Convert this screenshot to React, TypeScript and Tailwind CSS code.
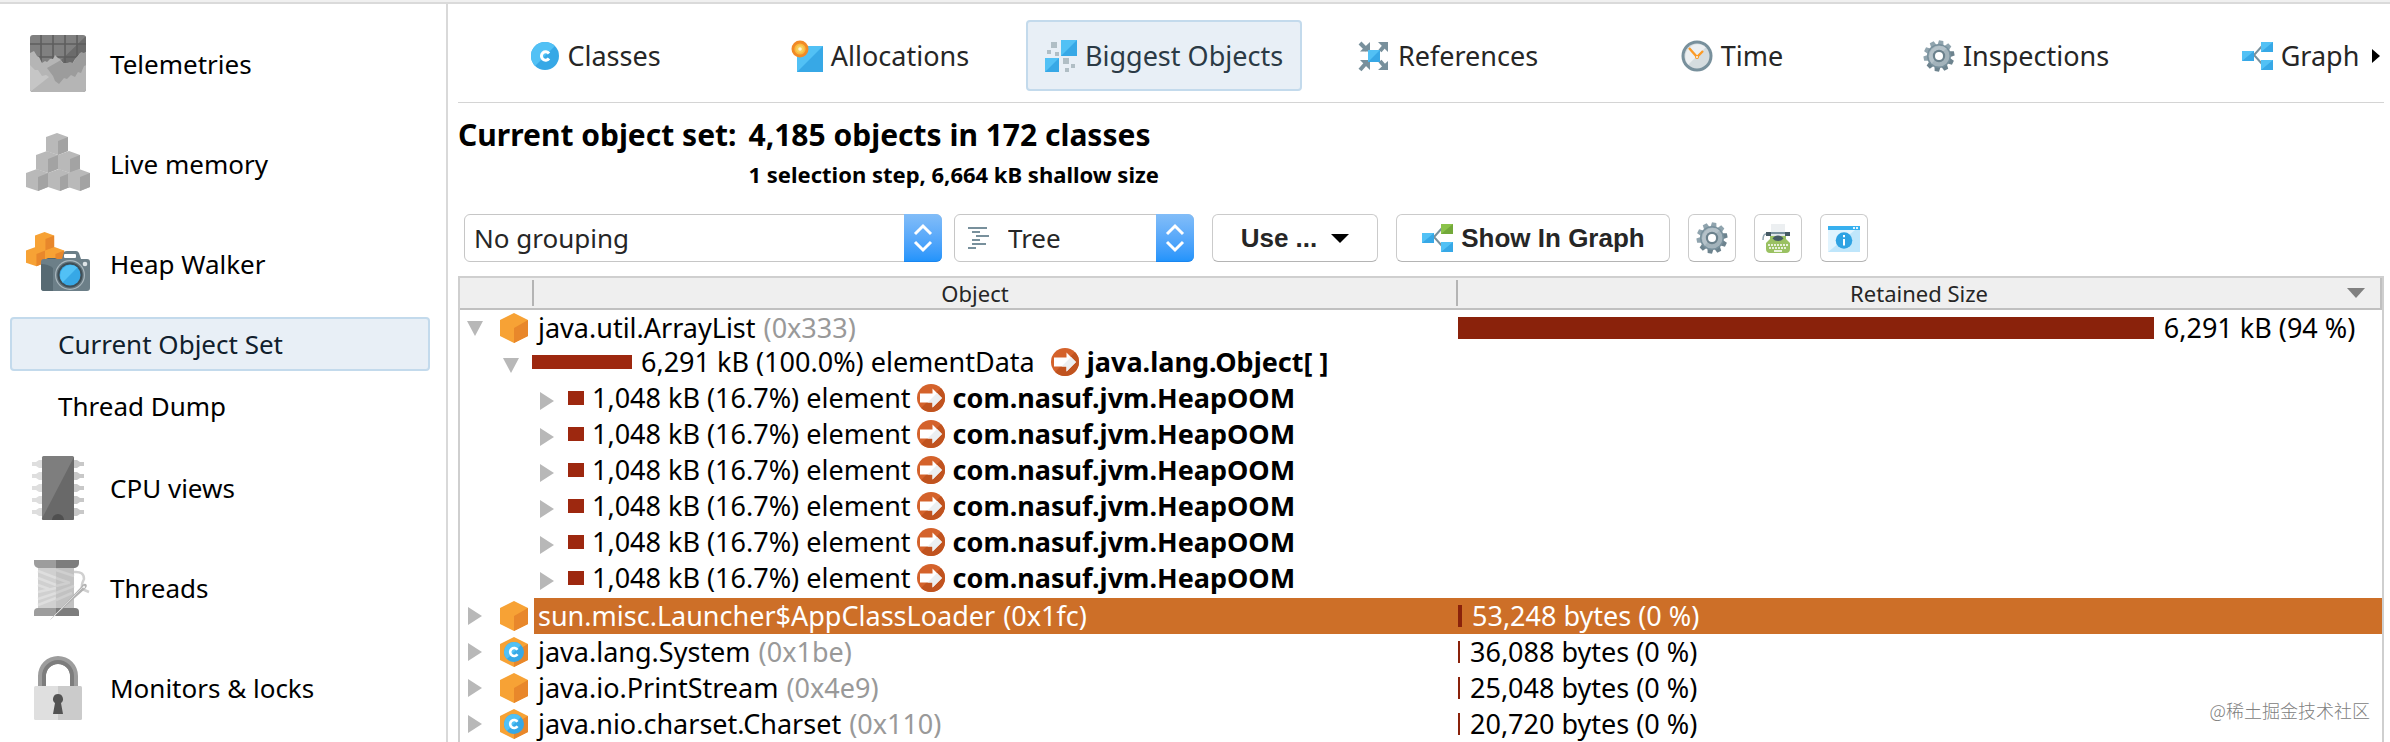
import React, { useState } from "react";

type IconProps = { className?: string };

/* ---------- sidebar icons ---------- */

function TelemetriesIcon() {
  return (
    <svg viewBox="0 0 64 64" className="size-16 shrink-0" aria-hidden="true">
      <clipPath id="tele">
        <rect x="4" y="3" width="56" height="57" rx="3" />
      </clipPath>
      <g clipPath="url(#tele)">
        <path d="M4 3h56v57H4z" fill="#808080" />
        <path d="M60 4v30H29z" fill="#6b6b6b" />
        <path d="M15 3v30M27 3v30M39 3v30M51 3v30M4 12h56M4 25h56" stroke="#5e5e5e" strokeWidth="1.6" />
        <path
          d="M4 21l4-2 3 5 2 1 3 6 3-2 2 1 3-3 3 0 2-4 3 3 2 1 4 5 5-1 3 1 3-5 3-3 2-3 3 1 3-2v40H4z"
          fill="#b5b5b5"
        />
        <path d="M35 28l1 3 5-0 3-1 3 1 3-5 3-3 2-3 3 1 3-2v14l-3 1-3 7-3-1-3 5-4-2-4 4-3-1-5 6-4-3-2-5-6-8z" fill="#9c9c9c" />
        <path d="M4 33l5 5 3 0 4 6 4-1 3 2-19 15z" fill="#c6c6c6" />
      </g>
    </svg>
  );
}

function Cube({ x, y, s = 1, light, dark }: { x: number; y: number; s?: number; light: string; dark: string }) {
  return (
    <g transform={`translate(${x} ${y}) scale(${s})`}>
      <path d="M0 4L11 0l11 4v14l-10 4L0 18z" fill={light} />
      <path d="M12 8l10-4v14l-10 4z" fill={dark} />
    </g>
  );
}

function MemoryIcon() {
  const c = { light: "#b9b9b9", dark: "#a3a3a3" };
  return (
    <svg viewBox="0 0 64 64" className="size-16 shrink-0" aria-hidden="true">
      <Cube x={20} y={1} {...c} />
      <Cube x={10} y={19} {...c} />
      <Cube x={32} y={19} {...c} />
      <Cube x={0} y={37} {...c} />
      <Cube x={22} y={37} {...c} />
      <Cube x={42} y={37} {...c} />
    </svg>
  );
}

function HeapIcon() {
  const c = { light: "#f7a235", dark: "#e8872b" };
  return (
    <svg viewBox="0 0 64 64" className="size-16 shrink-0" aria-hidden="true">
      <Cube x={9} y={0} s={0.87} {...c} />
      <Cube x={0} y={15} s={0.87} {...c} />
      <Cube x={19} y={15} s={0.87} {...c} />
      <path d="M36 27l2-7q1-1 3-1h9q2 0 3 2l2 6h6q3 0 3 3v26q0 3-3 3H18q-3 0-3-3V30q0-3 3-3z" fill="#6c7f88" />
      <path d="M15 32q7 0 12 4v23h-9q-3 0-3-3z" fill="#576a73" />
      <path d="M20 27h9l2-1h-9z" fill="#54666f" />
      <rect x="38" y="22" width="12" height="4" rx="1" fill="#fff" />
      <circle cx="44" cy="43" r="15" fill="#a9b7be" />
      <circle cx="44" cy="43" r="13.8" fill="#64757d" />
      <circle cx="44" cy="43" r="12.5" fill="#3f4e56" />
      <circle cx="44" cy="43" r="10.5" fill="#37a8e6" />
      <path d="M36.600 50.400a10.500 10.500 0 0 1 14.800-14.800z" fill="#52c1f5" />
      <circle cx="59" cy="32" r="2.300" fill="#dfe5e8" />
    </svg>
  );
}

function CpuIcon() {
  const rows = [8, 20, 32, 44, 56];
  return (
    <svg viewBox="0 0 64 64" className="size-16 shrink-0" aria-hidden="true">
      {rows.map((y) => (
        <g key={y}>
          <path d={`M6 ${y - 2}h4l3-2h3v8h-3l-3-2H6z`} fill="#dedede" />
          <path d={`M58 ${y - 2}h-4l-3-2h-3v8h3l3-2h4z`} fill="#c8c8c8" />
        </g>
      ))}
      <rect x="16" y="0" width="32" height="64" rx="1.5" fill="#7e7e7e" />
      <path d="M48 1v61.500q0 1.500-1.500 1.500H17.500q-1.500 0-1.500-1.500z" fill="#696969" />
      <path d="M26 64a6 6 0 0 1 12 0z" fill="#4f4f4f" />
    </svg>
  );
}

function ThreadsIcon() {
  return (
    <svg viewBox="0 0 64 64" className="size-16 shrink-0" aria-hidden="true">
      <path d="M12 12h18v40H12z" fill="#d0d0d0" />
      <path d="M30 12h18v40H30z" fill="#c2c2c2" />
      <path d="M12 15l18 7M12 22l18 7M12 29l11 4M12 43l18-6M12 49l18-7M12 36l18-4" stroke="#dedede" strokeWidth="2.500" />
      <path d="M30 14l18 6M30 22l14 5M30 37l18-7M30 44l16-7M30 30l12-3" stroke="#cfcfcf" strokeWidth="2.500" />
      <path d="M8 4h22v8H12q-4-1-4-5z" fill="#9d9d9d" />
      <path d="M30 4h23v3q0 4-4 5H30z" fill="#7d7d7d" />
      <path d="M12 52h18v8H8v-4q0-4 4-4z" fill="#9d9d9d" />
      <path d="M30 52h19q4 0 4 4v4H30z" fill="#7d7d7d" />
      <path d="M48 16q10-1 10 7-3 6-2 10l7 3" fill="none" stroke="#d0d0d0" strokeWidth="2.500" />
      <path d="M24.500 63.500L55 31q2-4 5-3 2 2-1 5z" fill="#b3b3b3" />
      <path d="M24.500 63.500L57 31" stroke="#d9d9d9" strokeWidth="1" />
      <circle cx="58" cy="31" r="1.200" fill="#eee" />
    </svg>
  );
}

function LockIcon() {
  return (
    <svg viewBox="0 0 64 64" className="size-16 shrink-0" aria-hidden="true">
      <path d="M12 31V20a20 20 0 0 1 40 0v11h-8V20a12 12 0 0 0-24 0v11z" fill="#9d9d9d" />
      <path d="M16 31V20a16 16 0 0 1 32 0v11h-4V20a12 12 0 0 0-24 0v11z" fill="#7d7d7d" />
      <path d="M32 30h22.500q1.500 0 1.500 1.500v31q0 1.500-1.500 1.500H32z" fill="#cbcbcb" />
      <path d="M32 30H9.500Q8 30 8 31.500v31Q8 64 9.500 64H32z" fill="#dfdfdf" />
      <path d="M32 38a5 5 0 0 1 3 9l2 11H27l2-11a5 5 0 0 1 3-9z" fill="#535353" />
    </svg>
  );
}

/* ---------- tab and toolbar icons ---------- */

function ClassBadge({ className = "size-7" }: IconProps) {
  return (
    <svg viewBox="0 0 28 28" className={className} aria-hidden="true">
      <circle cx="14" cy="14" r="14" fill="#37a8e6" />
      <path d="M4.100 23.900A14 14 0 0 1 23.900 4.100z" fill="#52c1f5" />
      <path d="M18 11.500a4.200 4.200 0 1 0 0 5" fill="none" stroke="#fff" strokeWidth="3" />
    </svg>
  );
}

function AllocationsIcon() {
  return (
    <svg viewBox="0 0 32 32" className="size-8" aria-hidden="true">
      <path d="M6 6h26v26H6z" fill="#37a8e6" />
      <path d="M6 32V6h26z" fill="#52c1f5" />
      <circle cx="9" cy="9" r="8.500" fill="#f18a26" />
      <circle cx="9" cy="9" r="5.600" fill="#f9b93f" />
      <circle cx="9" cy="9" r="3.800" fill="#f7cf5c" />
      <circle cx="9" cy="9" r="1.800" fill="#fff6d8" />
    </svg>
  );
}

function BiggestIcon() {
  return (
    <svg viewBox="0 0 32 32" className="size-8" aria-hidden="true">
      <path d="M16 0h16v16H16zM0 18h14v14H0z" fill="#37a8e6" />
      <path d="M16 16V0h16zM0 32V18h14z" fill="#52c1f5" />
      <path d="M6 2h6v6H6zM2 10h4v4H2zM10 12h4v4h-4zM18 18h6v6h-6zM26 24h4v4h-4zM20 28h4v4h-4z" fill="#b0bec5" />
    </svg>
  );
}

function ReferencesIcon() {
  return (
    <svg viewBox="0 0 32 32" className="size-8" aria-hidden="true">
      <path d="M2 3l7 7M2 30l7-8M22 11l6-7M22 21l6 7" stroke="#78909c" strokeWidth="4" />
      <path d="M2 11.500h10V2zM20 2h10v10zM2 20h10v10zM30 21v9H20z" fill="#78909c" />
      <path d="M10 10h12v12H10z" fill="#37a8e6" />
      <path d="M10 22V10h12z" fill="#52c1f5" />
    </svg>
  );
}

function ClockIcon() {
  return (
    <svg viewBox="0 0 32 32" className="size-8" aria-hidden="true">
      <circle cx="16" cy="16" r="15.500" fill="#78909c" />
      <circle cx="16" cy="16" r="12.500" fill="#d5dcdf" />
      <path d="M7.200 24.800A12.500 12.500 0 0 1 24.800 7.200z" fill="#eceff1" />
      <path d="M8 8l8 9 6-6" fill="none" stroke="#fb9a26" strokeWidth="2.400" />
      <circle cx="16" cy="17" r="2" fill="#fb9a26" />
      <circle cx="16" cy="17" r="0.900" fill="#fff" />
    </svg>
  );
}

function GearIcon() {
  const teeth = [0, 36, 72, 108, 144, 180, 216, 252, 288, 324];
  return (
    <svg viewBox="0 0 32 32" className="size-8" aria-hidden="true">
      {teeth.map((a) => (
        <path
          key={a}
          d="M13 5l.8-4.500h4.400L19 5z"
          fill={a > 60 && a < 230 ? "#6d838e" : "#90a4ae"}
          transform={`rotate(${a + 8} 16 16)`}
        />
      ))}
      <circle cx="16" cy="16" r="12" fill="#78909c" />
      <circle cx="16" cy="16" r="10.500" fill="#a3b3bb" />
      <path d="M8.600 23.400A10.500 10.500 0 0 1 23.400 8.600z" fill="#b5c2c9" />
      <circle cx="16" cy="16" r="6.200" fill="#6b818c" />
      <circle cx="16" cy="16" r="4" fill="#fff" />
    </svg>
  );
}

function GraphIcon({ top = "#37a8e6", topLight = "#52c1f5" }: { top?: string; topLight?: string }) {
  return (
    <svg viewBox="0 0 32 32" className="size-8" aria-hidden="true">
      <path d="M22 5l-9 10 9 10" fill="none" stroke="#78909c" strokeWidth="2" />
      <path d="M1 11h12v10H1zM20 20h12v10H20z" fill="#37a8e6" />
      <path d="M1 21V11h12zM20 30V20h12z" fill="#52c1f5" />
      <path d="M20 2h12v10H20z" fill={top} />
      <path d="M20 12V2h12z" fill={topLight} />
    </svg>
  );
}

function ExportIcon() {
  return (
    <svg viewBox="0 0 32 32" className="size-8" aria-hidden="true">
      <path d="M9 2h14v10H9z" fill="#eceff1" />
      <path d="M4 10h24v4H4z" fill="#78909c" />
      <path d="M4 10h5v4H4zM23 10h5v4h-5z" fill="#455a64" />
      <path d="M1 18q0-6 3-6" fill="none" stroke="#90a4ae" strokeWidth="1.500" />
      <path d="M8 14h16v3l4 4v6q0 4-4 4H8q-4 0-4-4v-6l4-4z" fill="#9ac162" />
      <path d="M9 12h14v2H9z" fill="#dfe5e8" />
      <path d="M10.500 16.500q2-3 5.500-3t5.500 3q-2 2.500-5.500 2.500t-5.500-2.500z" fill="#455a64" />
      <path d="M6 23h20M7 26h18" stroke="#fff" strokeWidth="1.600" strokeDasharray="2 1" />
      <path d="M12 29h8" stroke="#fff" strokeWidth="1.600" />
    </svg>
  );
}

function InfoIcon() {
  return (
    <svg viewBox="0 0 32 32" className="size-8" aria-hidden="true">
      <path d="M0 4h32v26H0z" fill="#bfe6fb" />
      <path d="M0 30V8h27z" fill="#e1f4fe" />
      <path d="M0 4h32v4H0z" fill="#37b0ef" />
      <path d="M25 5h2v2h-2zM28 5h2v2h-2z" fill="#e1f4fe" />
      <circle cx="16" cy="18.500" r="8.300" fill="#2fa3e3" />
      <path d="M15 17h2v6.500h-2zM15 13h2v2.200h-2z" fill="#fff" />
    </svg>
  );
}

function TreeIcon() {
  return (
    <svg viewBox="0 0 24 24" className="size-6" aria-hidden="true">
      <path d="M1 2h19M5 6h8M9 10h13M5 14h8M5 18h14M1 22h8" stroke="#78909c" strokeWidth="2" />
    </svg>
  );
}

function HexIcon({ withClass = false }: { withClass?: boolean }) {
  return (
    <svg viewBox="0 0 28 30" className="h-[30px] w-7 shrink-0" aria-hidden="true">
      <path d="M14 0l14 7v16l-14 7L0 23V7z" fill="#f7a235" />
      <path d="M14 15l14-8v16l-14 7z" fill="#e8872b" />
      {withClass && (
        <>
          <circle cx="14" cy="15" r="10" fill="#37a8e6" />
          <path d="M6.900 22.100A10 10 0 0 1 21.100 7.900z" fill="#52c1f5" />
          <path d="M17.500 12.800a4 4 0 1 0 0 4.400" fill="none" stroke="#fff" strokeWidth="2.600" />
        </>
      )}
    </svg>
  );
}

function ReferenceArrow() {
  return (
    <svg viewBox="0 0 28 28" className="size-7 shrink-0" aria-hidden="true">
      <circle cx="14" cy="14" r="14" fill="#d4622b" />
      <path d="M23.900 4.100A14 14 0 0 1 4.100 23.900z" fill="#c0531f" />
      <path d="M3 9.500h12.500V4.500L25 14l-9.500 9.500V18.500H3z" fill="#fff" />
      <path d="M20 9l5 5-9.500 9.500V18.500H10.500z" fill="#eceff1" />
    </svg>
  );
}

function Toggle({ open, label, className = "" }: { open?: boolean; label: string; className?: string }) {
  return (
    <button
      type="button"
      aria-label={label}
      aria-expanded={!!open}
      className={`flex size-[18px] shrink-0 items-center ${className}`}
    >
      <svg viewBox="0 0 18 18" className="size-[18px]" aria-hidden="true">
        <path d={open ? "M1 2h16l-8 15z" : "M2 0v18l14-9z"} fill="#b8b8b8" />
      </svg>
    </button>
  );
}

function Stepper() {
  return (
    <span className="pointer-events-none absolute inset-y-0 right-0 flex w-[38px] items-center justify-center rounded-r-md border-b border-[#1a86f0] bg-gradient-to-b from-[#82bdf8] to-[#2294fb]">
      <svg viewBox="0 0 20 30" className="h-[30px] w-5" aria-hidden="true">
        <path d="M2 11l8-8 8 8M2 19l8 8 8-8" fill="none" stroke="#fff" strokeWidth="3" />
      </svg>
    </span>
  );
}

/* ---------- sections ---------- */

function NavItem({ icon, label }: { icon: React.ReactNode; label: string }) {
  return (
    <a href="#" className="flex h-[100px] items-center gap-5 pl-[26px]">
      {icon}
      <span>{label}</span>
    </a>
  );
}

function Sidebar() {
  return (
    <nav className="w-[448px] shrink-0 border-r-2 border-[#d9d9d9] pt-[10px]">
      <NavItem icon={<TelemetriesIcon />} label="Telemetries" />
      <NavItem icon={<MemoryIcon />} label="Live memory" />
      <NavItem icon={<HeapIcon />} label="Heap Walker" />
      <div className="flex flex-col gap-[6px] pt-[3px] pb-[3px]">
        <a
          href="#"
          aria-current="page"
          className="mr-4 ml-[10px] flex h-[54px] items-center rounded-sm border-2 border-[#c3daec] bg-[#e8eff6] pl-[46px] text-[#10202c]"
        >
          Current Object Set
        </a>
        <a href="#" className="flex h-[58px] items-center pl-[58px]">
          Thread Dump
        </a>
      </div>
      <NavItem icon={<CpuIcon />} label="CPU views" />
      <NavItem icon={<ThreadsIcon />} label="Threads" />
      <NavItem icon={<LockIcon />} label="Monitors & locks" />
    </nav>
  );
}

const tabs = [
  { label: "Classes", icon: <ClassBadge /> },
  { label: "Allocations", icon: <AllocationsIcon /> },
  { label: "Biggest Objects", icon: <BiggestIcon /> },
  { label: "References", icon: <ReferencesIcon /> },
  { label: "Time", icon: <ClockIcon /> },
  { label: "Inspections", icon: <GearIcon /> },
  { label: "Graph", icon: <GraphIcon /> },
];

function Tabs() {
  const [active, setActive] = useState("Biggest Objects");
  return (
    <div className="flex items-center border-b border-[#d4d4d4] pt-4 pb-[11px] text-[27px]">
      <div role="tablist" className="flex min-w-0 flex-1 gap-2 overflow-hidden">
        {tabs.map((t) => (
          <button
            key={t.label}
            type="button"
            role="tab"
            aria-selected={active === t.label}
            onClick={() => setActive(t.label)}
            className={
              active === t.label
                ? "flex h-[71px] w-[276px] shrink-0 items-center justify-center gap-2 rounded-sm border-2 border-[#c3daec] bg-[#e8eff6] text-[#2b3a45]"
                : "flex h-[71px] w-[276px] shrink-0 items-center justify-center gap-2 text-[#262626]"
            }
          >
            {t.icon}
            <span>{t.label}</span>
          </button>
        ))}
      </div>
      <button type="button" aria-label="More tabs" className="flex w-4 shrink-0 justify-center">
        <svg viewBox="0 0 8 14" className="h-[14px] w-2" aria-hidden="true">
          <path d="M0 0l8 7-8 7z" fill="#000" />
        </svg>
      </button>
    </div>
  );
}

const buttonClass =
  "flex h-12 shrink-0 items-center justify-center rounded-md border border-[#cbcbcb] border-b-[#b4b4b4] bg-white font-['Liberation_Sans',sans-serif] text-[26px] font-bold text-[#262626]";

function Toolbar() {
  return (
    <div className="flex items-center gap-[18px] pt-[23px] pl-[6px]">
      <div className="flex gap-3">
        <div className="relative">
          <select
            aria-label="Grouping"
            className="block h-12 w-[478px] appearance-none rounded-md border border-[#c6c6c6] bg-white pl-[9px] text-[#262626]"
          >
            <option>No grouping</option>
          </select>
          <Stepper />
        </div>
        <div className="relative">
          <span className="pointer-events-none absolute inset-y-0 left-[13px] flex items-center">
            <TreeIcon />
          </span>
          <select
            aria-label="View mode"
            className="block h-12 w-60 appearance-none rounded-md border border-[#c6c6c6] bg-white pl-[53px] text-[#262626]"
          >
            <option>Tree</option>
          </select>
          <Stepper />
        </div>
      </div>
      <button type="button" className={`${buttonClass} w-[166px] gap-[14px]`}>
        Use ...
        <svg viewBox="0 0 18 9" className="h-[9px] w-[18px]" aria-hidden="true">
          <path d="M0 0h18l-9 9z" fill="#000" />
        </svg>
      </button>
      <button type="button" className={`${buttonClass} w-[274px] gap-2`}>
        <GraphIcon top="#73a93a" topLight="#8bc34a" />
        Show In Graph
      </button>
      <button type="button" aria-label="View settings" className={`${buttonClass} w-12`}>
        <GearIcon />
      </button>
      <button type="button" aria-label="Export" className={`${buttonClass} w-12`}>
        <ExportIcon />
      </button>
      <button type="button" aria-label="Information" className={`${buttonClass} w-12`}>
        <InfoIcon />
      </button>
    </div>
  );
}

const elements = [0, 1, 2, 3, 4, 5];

function RootRow(props: {
  name: string;
  id: string;
  size: string;
  percent?: number;
  isClass?: boolean;
  open?: boolean;
  selected?: boolean;
}) {
  const { name, id, size, percent, isClass, open, selected } = props;
  return (
    <tr className="h-9" aria-selected={!!selected}>
      <td colSpan={2} className="p-0">
        <div className="flex h-9 items-center pl-[6px]">
          <Toggle open={open} label={`Toggle ${name}`} />
          <span className="mx-4">
            <HexIcon withClass={isClass} />
          </span>
          <span
            className={
              selected
                ? "-ml-2.5 flex h-9 flex-1 items-center gap-2 bg-[#cd6f28] pl-1 text-white"
                : "-ml-2.5 flex h-9 flex-1 items-center gap-2 pl-1"
            }
          >
            {name}
            <span className={selected ? "" : "text-[#999]"}>{id}</span>
          </span>
        </div>
      </td>
      <td className={selected ? "bg-[#cd6f28] p-0 text-white" : "p-0"}>
        <div className="flex h-9 items-center gap-[10px] whitespace-nowrap">
          <span
            className={selected ? "h-[22px] w-1 shrink-0 bg-[#8a220b]" : "h-[22px] min-w-0.5 shrink-0 bg-[#8a220b]"}
            style={percent ? { width: `${percent}%` } : undefined}
          />
          {size}
        </div>
      </td>
    </tr>
  );
}

function ObjectTable() {
  return (
    <table className="mt-[14px] w-full table-fixed border-separate border-spacing-0 border-2 border-b-0 border-[#cfcfcf] text-[27px]">
      <colgroup>
        <col className="w-[74px]" />
        <col />
        <col />
      </colgroup>
      <thead className="bg-[#efefef] text-[22px] leading-[30px] text-[#262626]">
        <tr>
          <th className="border-b-2 border-[#c0c0c0] p-0">
            <span className="ml-auto block h-[26px] w-0.5 bg-[#b4b4b4]" />
          </th>
          <th scope="col" className="border-b-2 border-[#c0c0c0] p-0 font-normal">
            <div className="flex items-center">
              <span className="flex-1 pr-10">Object</span>
              <span className="h-[26px] w-0.5 bg-[#b4b4b4]" />
            </div>
          </th>
          <th scope="col" aria-sort="descending" className="border-r-2 border-b-2 border-[#c0c0c0] p-0 font-normal">
            <div className="flex items-center pr-[15px] pl-[33px]">
              <span className="flex-1">Retained Size</span>
              <svg viewBox="0 0 18 10" className="h-[10px] w-[18px]" aria-hidden="true">
                <path d="M0 0h18l-9 10z" fill="#808080" />
              </svg>
            </div>
          </th>
        </tr>
      </thead>
      <tbody>
        <RootRow name="java.util.ArrayList" id="(0x333)" size="6,291 kB (94 %)" percent={75.3} open />
        <tr className="h-9">
          <td colSpan={2} className="p-0">
            <div className="flex h-9 items-center pb-1 pl-[42px] whitespace-nowrap">
              <Toggle open label="Toggle elementData" className="mt-1.5" />
              <span className="mr-[9px] ml-3 h-[14px] w-[100px] bg-[#9d280f]" />
              6,291 kB (100.0%) elementData
              <span className="mr-2 ml-4">
                <ReferenceArrow />
              </span>
              <b>java.lang.Object[ ]</b>
            </div>
          </td>
          <td className="p-0" />
        </tr>
        {elements.map((i) => (
          <tr key={i} className="h-9">
            <td colSpan={2} className="p-0">
              <div className="flex h-9 items-center pb-1 pl-[78px] whitespace-nowrap">
                <Toggle label={`Toggle element ${i + 1}`} className="mt-1.5" />
                <span className="mr-2 ml-3 h-[14px] w-4 bg-[#9d280f]" />
                1,048 kB (16.7%) element
                <span className="mr-2 ml-1.5">
                  <ReferenceArrow />
                </span>
                <b>com.nasuf.jvm.HeapOOM</b>
              </div>
            </td>
            <td className="p-0" />
          </tr>
        ))}
        <RootRow name="sun.misc.Launcher$AppClassLoader" id="(0x1fc)" size="53,248 bytes (0 %)" selected />
        <RootRow name="java.lang.System" id="(0x1be)" size="36,088 bytes (0 %)" isClass />
        <RootRow name="java.io.PrintStream" id="(0x4e9)" size="25,048 bytes (0 %)" />
        <RootRow name="java.nio.charset.Charset" id="(0x110)" size="20,720 bytes (0 %)" isClass />
      </tbody>
    </table>
  );
}

export default function App() {
  return (
    <div className="relative flex min-h-screen flex-col overflow-hidden bg-white font-['Noto_Sans',sans-serif] text-[26px] leading-9 text-black">
      <div className="h-1 border-b-2 border-[#dadada] bg-[#f0f0f0]" />
      <div className="flex flex-1">
        <Sidebar />
        <main className="min-w-0 flex-1 pr-[6px] pl-[10px]">
          <Tabs />
          <div className="flex gap-3 pt-3 font-bold">
            <h1 className="text-[30px] leading-[40px]">Current object set:</h1>
            <div>
              <p className="text-[30px] leading-[40px]">4,185 objects in 172 classes</p>
              <p className="pt-0.5 text-[22px] leading-[34px]">1 selection step, 6,664 kB shallow size</p>
            </div>
          </div>
          <Toolbar />
          <ObjectTable />
        </main>
      </div>
      <p className="absolute right-5 bottom-5 font-['Noto_Sans_CJK_SC',sans-serif] text-[18px] leading-6 font-light text-[#808080]">
        @稀土掘金技术社区
      </p>
    </div>
  );
}
